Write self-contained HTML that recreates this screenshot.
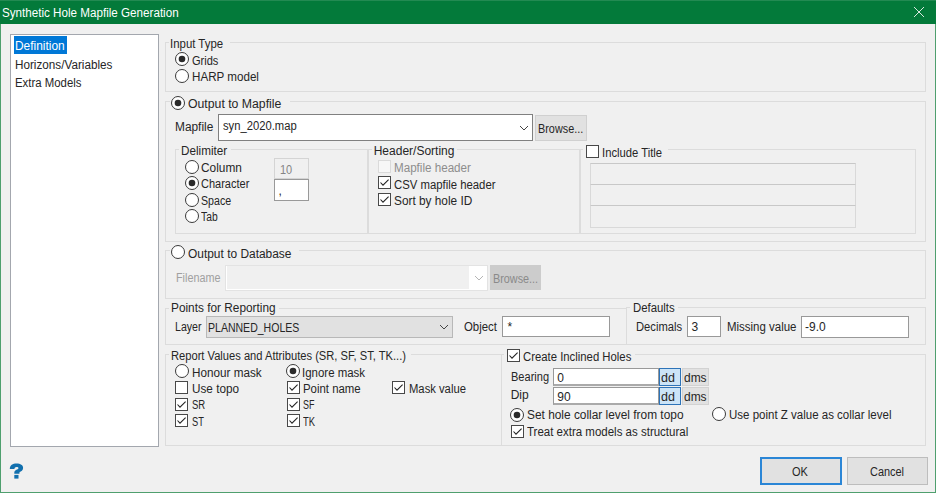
<!DOCTYPE html>
<html><head><meta charset="utf-8"><style>
html,body{margin:0;padding:0;width:936px;height:493px;overflow:hidden;background:#f0f0f0}
body{position:relative;font-family:"Liberation Sans",sans-serif;font-size:12px}
</style></head><body>
<div style="position:absolute;left:0px;top:0px;width:936px;height:493px;background:#4f9f6e"></div>
<div style="position:absolute;left:0px;top:0px;width:936px;height:24px;background:#037a3a"></div>
<div style="position:absolute;left:0px;top:0px;width:936px;height:1px;background:#238a52"></div>
<div style="position:absolute;left:1px;top:24px;width:934px;height:468px;background:#f0f0f0"></div>
<div style="position:absolute;left:2.40px;top:6.30px;font-size:12px;line-height:14px;color:#ffffff;white-space:pre;transform:scaleX(0.9701);transform-origin:0 0;">Synthetic Hole Mapfile Generation</div>
<svg style="position:absolute;left:913px;top:6px" width="12" height="12"><path d="M1 1 L11 11 M11 1 L1 11" stroke="#d8e8de" stroke-width="1"/></svg>
<div style="position:absolute;left:10px;top:34px;width:149px;height:413px;border:1px solid #a3a7ae;background:#fff;box-sizing:border-box"></div>
<div style="position:absolute;left:14px;top:36px;width:53px;height:18px;background:#0078d7"></div>
<div style="position:absolute;left:15.40px;top:39.20px;font-size:12px;line-height:14px;color:#fff;white-space:pre;transform:scaleX(0.9928);transform-origin:0 0;">Definition</div>
<div style="position:absolute;left:15.00px;top:57.50px;font-size:12px;line-height:14px;color:#262626;white-space:pre;transform:scaleX(0.9758);transform-origin:0 0;">Horizons/Variables</div>
<div style="position:absolute;left:15.00px;top:76.30px;font-size:12px;line-height:14px;color:#262626;white-space:pre;transform:scaleX(0.9497);transform-origin:0 0;">Extra Models</div>
<svg style="position:absolute;left:0;top:440px" width="40" height="50"><path d="M9.8 29.1 C9.8 25.2 12.8 23.6 16.5 23.6 C20.5 23.6 23.1 25.3 23.1 28 C23.1 30.4 21.2 31.3 19.6 32.1 L19.4 33.8 L14.3 33.8 L14.3 32.6 C14.3 31 15.6 30.2 17 29.5 C18 29 18.4 28.6 18.4 27.9 C18.4 27.2 17.7 26.9 16.6 26.9 C15.2 26.9 14.5 27.6 14.4 29.1 Z" fill="#1270ae"/><rect x="14.3" y="34.9" width="4.2" height="3.7" fill="#1270ae"/></svg>
<div style="position:absolute;left:165px;top:42px;width:761px;height:50px;border:1px solid #dcdcdc;box-sizing:border-box"></div>
<div style="position:absolute;left:169px;top:41px;width:61px;height:3px;background:#f0f0f0"></div>
<div style="position:absolute;left:170.35px;top:37.10px;font-size:12px;line-height:14px;color:#262626;white-space:pre;transform:scaleX(0.9518);transform-origin:0 0;">Input Type</div>
<svg style="position:absolute;left:174px;top:51.2px" width="16" height="16"><circle cx="8" cy="8" r="6.5" fill="#fff" stroke="#3a3a3a" stroke-width="1"/><circle cx="8" cy="8" r="3.3" fill="#2a2a2a"/></svg>
<div style="position:absolute;left:191.90px;top:54.00px;font-size:12px;line-height:14px;color:#262626;white-space:pre;transform:scaleX(0.9208);transform-origin:0 0;">Grids</div>
<svg style="position:absolute;left:174px;top:68px" width="16" height="16"><circle cx="8" cy="8" r="6.5" fill="#fff" stroke="#3a3a3a" stroke-width="1"/></svg>
<div style="position:absolute;left:191.90px;top:70.20px;font-size:12px;line-height:14px;color:#262626;white-space:pre;transform:scaleX(0.9681);transform-origin:0 0;">HARP model</div>
<div style="position:absolute;left:165px;top:101px;width:761px;height:141px;border:1px solid #dcdcdc;box-sizing:border-box"></div>
<div style="position:absolute;left:170px;top:100px;width:120px;height:3px;background:#f0f0f0"></div>
<svg style="position:absolute;left:170px;top:94.5px" width="16" height="16"><circle cx="8" cy="8" r="6.5" fill="#fff" stroke="#3a3a3a" stroke-width="1"/><circle cx="8" cy="8" r="3.3" fill="#2a2a2a"/></svg>
<div style="position:absolute;left:187.80px;top:97.20px;font-size:12px;line-height:14px;color:#262626;white-space:pre;transform:scaleX(1.0217);transform-origin:0 0;">Output to Mapfile</div>
<div style="position:absolute;left:175.10px;top:120.30px;font-size:12px;line-height:14px;color:#262626;white-space:pre;transform:scaleX(0.9895);transform-origin:0 0;">Mapfile</div>
<div style="position:absolute;left:218px;top:114px;width:315px;height:27px;border:1px solid #808080;background:#fff;box-sizing:border-box"></div>
<div style="position:absolute;left:222.70px;top:119.10px;font-size:12px;line-height:14px;color:#262626;white-space:pre;transform:scaleX(0.9362);transform-origin:0 0;">syn_2020.map</div>
<svg style="position:absolute;left:519px;top:124.5px" width="10" height="6"><path d="M1 1 L5 5 L9 1" fill="none" stroke="#444" stroke-width="1"/></svg>
<div style="position:absolute;left:535px;top:115px;width:52px;height:26px;border:1px solid #d0d0d0;background:#e1e1e1;box-sizing:border-box"></div>
<div style="position:absolute;left:538.00px;top:121.90px;font-size:12px;line-height:14px;color:#262626;white-space:pre;transform:scaleX(0.9038);transform-origin:0 0;">Browse...</div>
<div style="position:absolute;left:175px;top:149px;width:193px;height:85px;border:1px solid #dcdcdc;box-sizing:border-box"></div>
<div style="position:absolute;left:179px;top:148px;width:52px;height:3px;background:#f0f0f0"></div>
<div style="position:absolute;left:181.10px;top:143.50px;font-size:12px;line-height:14px;color:#262626;white-space:pre;transform:scaleX(0.9759);transform-origin:0 0;">Delimiter</div>
<svg style="position:absolute;left:183.8px;top:158.5px" width="16" height="16"><circle cx="8" cy="8" r="6.5" fill="#fff" stroke="#3a3a3a" stroke-width="1"/></svg>
<div style="position:absolute;left:201.40px;top:161.00px;font-size:12px;line-height:14px;color:#262626;white-space:pre;transform:scaleX(0.9883);transform-origin:0 0;">Column</div>
<svg style="position:absolute;left:183.8px;top:175.1px" width="16" height="16"><circle cx="8" cy="8" r="6.5" fill="#fff" stroke="#3a3a3a" stroke-width="1"/><circle cx="8" cy="8" r="3.3" fill="#2a2a2a"/></svg>
<div style="position:absolute;left:201.40px;top:177.40px;font-size:12px;line-height:14px;color:#262626;white-space:pre;transform:scaleX(0.9167);transform-origin:0 0;">Character</div>
<svg style="position:absolute;left:183.8px;top:191.7px" width="16" height="16"><circle cx="8" cy="8" r="6.5" fill="#fff" stroke="#3a3a3a" stroke-width="1"/></svg>
<div style="position:absolute;left:201.40px;top:194.00px;font-size:12px;line-height:14px;color:#262626;white-space:pre;transform:scaleX(0.8850);transform-origin:0 0;">Space</div>
<svg style="position:absolute;left:183.8px;top:207.8px" width="16" height="16"><circle cx="8" cy="8" r="6.5" fill="#fff" stroke="#3a3a3a" stroke-width="1"/></svg>
<div style="position:absolute;left:201.40px;top:210.40px;font-size:12px;line-height:14px;color:#262626;white-space:pre;transform:scaleX(0.8590);transform-origin:0 0;">Tab</div>
<div style="position:absolute;left:274px;top:158px;width:35px;height:21px;border:1px solid #d4d4d4;background:#f0f0f0;box-sizing:border-box"></div>
<div style="position:absolute;left:280.00px;top:163.30px;font-size:12px;line-height:14px;color:#858585;white-space:pre;transform:scaleX(0.9142);transform-origin:0 0;">10</div>
<div style="position:absolute;left:274px;top:179px;width:35px;height:22px;border:1px solid #999;background:#fff;box-sizing:border-box"></div>
<div style="position:absolute;left:278.40px;top:183.60px;font-size:12px;line-height:14px;color:#262626;white-space:pre;">,</div>
<div style="position:absolute;left:368px;top:149px;width:212px;height:85px;border:1px solid #dcdcdc;box-sizing:border-box"></div>
<div style="position:absolute;left:372px;top:148px;width:85px;height:3px;background:#f0f0f0"></div>
<div style="position:absolute;left:373.70px;top:144.30px;font-size:12px;line-height:14px;color:#262626;white-space:pre;">Header/Sorting</div>
<div style="position:absolute;left:378px;top:160px;width:13px;height:13px;box-sizing:border-box;border:1px solid #dadada;background:#f7f7f7"></div>
<div style="position:absolute;left:394.30px;top:160.80px;font-size:12px;line-height:14px;color:#8d8d8d;white-space:pre;transform:scaleX(0.9687);transform-origin:0 0;">Mapfile header</div>
<div style="position:absolute;left:378px;top:176px;width:13px;height:13px;box-sizing:border-box;border:1px solid #484848;background:#fff"></div>
<svg style="position:absolute;left:378px;top:176px" width="13" height="13"><path d="M2.5 6.5 L5 9.2 L10.6 3.6" fill="none" stroke="#222" stroke-width="1.1"/></svg>
<div style="position:absolute;left:394.30px;top:177.50px;font-size:12px;line-height:14px;color:#262626;white-space:pre;transform:scaleX(0.9451);transform-origin:0 0;">CSV mapfile header</div>
<div style="position:absolute;left:378px;top:193px;width:13px;height:13px;box-sizing:border-box;border:1px solid #484848;background:#fff"></div>
<svg style="position:absolute;left:378px;top:193px" width="13" height="13"><path d="M2.5 6.5 L5 9.2 L10.6 3.6" fill="none" stroke="#222" stroke-width="1.1"/></svg>
<div style="position:absolute;left:394.30px;top:194.00px;font-size:12px;line-height:14px;color:#262626;white-space:pre;transform:scaleX(0.9861);transform-origin:0 0;">Sort by hole ID</div>
<div style="position:absolute;left:580px;top:149px;width:336px;height:85px;border:1px solid #dcdcdc;box-sizing:border-box"></div>
<div style="position:absolute;left:583px;top:148px;width:85px;height:3px;background:#f0f0f0"></div>
<div style="position:absolute;left:585.5px;top:144.5px;width:13px;height:13px;box-sizing:border-box;border:1px solid #484848;background:#fff"></div>
<div style="position:absolute;left:601.66px;top:146.30px;font-size:12px;line-height:14px;color:#262626;white-space:pre;transform:scaleX(0.9378);transform-origin:0 0;">Include Title</div>
<div style="position:absolute;left:589.5px;top:163px;width:266.5px;height:22px;border:1px solid #d9d9d9;border-top-color:#c8c8c8;background:#f0f0f0;box-sizing:border-box"></div>
<div style="position:absolute;left:589.5px;top:184px;width:266.5px;height:22px;border:1px solid #d9d9d9;border-top-color:#c8c8c8;background:#f0f0f0;box-sizing:border-box"></div>
<div style="position:absolute;left:589.5px;top:205px;width:266.5px;height:22.5px;border:1px solid #d9d9d9;border-top-color:#c8c8c8;background:#f0f0f0;box-sizing:border-box"></div>
<div style="position:absolute;left:165px;top:250px;width:761px;height:48.5px;border:1px solid #dcdcdc;box-sizing:border-box"></div>
<div style="position:absolute;left:170px;top:249px;width:129px;height:3px;background:#f0f0f0"></div>
<svg style="position:absolute;left:170px;top:243.8px" width="16" height="16"><circle cx="8" cy="8" r="6.5" fill="#fff" stroke="#3a3a3a" stroke-width="1"/></svg>
<div style="position:absolute;left:187.60px;top:247.10px;font-size:12px;line-height:14px;color:#262626;white-space:pre;transform:scaleX(0.9943);transform-origin:0 0;">Output to Database</div>
<div style="position:absolute;left:175.60px;top:270.50px;font-size:12px;line-height:14px;color:#a0a0a0;white-space:pre;transform:scaleX(0.9018);transform-origin:0 0;">Filename</div>
<div style="position:absolute;left:225px;top:264.5px;width:263px;height:26px;border:1px solid #e3e3e3;background:#fff;box-sizing:border-box"></div>
<div style="position:absolute;left:227px;top:266.3px;width:241.5px;height:22.5px;background:#f0f0f0"></div>
<svg style="position:absolute;left:473.5px;top:274.8px" width="10" height="6"><path d="M1 1 L5 5 L9 1" fill="none" stroke="#b5b5b5" stroke-width="1"/></svg>
<div style="position:absolute;left:490px;top:265px;width:51px;height:25px;background:#cccccc"></div>
<div style="position:absolute;left:492.60px;top:272.20px;font-size:12px;line-height:14px;color:#8a8a8a;white-space:pre;transform:scaleX(0.9017);transform-origin:0 0;">Browse...</div>
<div style="position:absolute;left:165px;top:308px;width:462px;height:37px;border:1px solid #dcdcdc;box-sizing:border-box"></div>
<div style="position:absolute;left:169px;top:307px;width:110px;height:3px;background:#f0f0f0"></div>
<div style="position:absolute;left:171.40px;top:301.40px;font-size:12px;line-height:14px;color:#262626;white-space:pre;transform:scaleX(0.9859);transform-origin:0 0;">Points for Reporting</div>
<div style="position:absolute;left:175.10px;top:320.00px;font-size:12px;line-height:14px;color:#262626;white-space:pre;transform:scaleX(0.8827);transform-origin:0 0;">Layer</div>
<div style="position:absolute;left:206px;top:316px;width:247px;height:22px;border:1px solid #b8b8b8;background:#e1e1e1;box-sizing:border-box"></div>
<div style="position:absolute;left:208.10px;top:320.80px;font-size:12px;line-height:14px;color:#262626;white-space:pre;transform:scaleX(0.8776);transform-origin:0 0;">PLANNED_HOLES</div>
<svg style="position:absolute;left:438.5px;top:323.7px" width="10" height="6"><path d="M1 1 L5 5 L9 1" fill="none" stroke="#444" stroke-width="1"/></svg>
<div style="position:absolute;left:464.10px;top:319.90px;font-size:12px;line-height:14px;color:#262626;white-space:pre;transform:scaleX(0.9506);transform-origin:0 0;">Object</div>
<div style="position:absolute;left:501.5px;top:316px;width:108px;height:21px;border:1px solid #999;background:#fff;box-sizing:border-box"></div>
<div style="position:absolute;left:507.40px;top:319.90px;font-size:12px;line-height:14px;color:#262626;white-space:pre;">*</div>
<div style="position:absolute;left:626px;top:307px;width:300px;height:38px;border:1px solid #dcdcdc;box-sizing:border-box"></div>
<div style="position:absolute;left:630px;top:306px;width:48px;height:3px;background:#f0f0f0"></div>
<div style="position:absolute;left:632.70px;top:301.30px;font-size:12px;line-height:14px;color:#262626;white-space:pre;transform:scaleX(0.9473);transform-origin:0 0;">Defaults</div>
<div style="position:absolute;left:636.40px;top:319.90px;font-size:12px;line-height:14px;color:#262626;white-space:pre;transform:scaleX(0.9323);transform-origin:0 0;">Decimals</div>
<div style="position:absolute;left:687px;top:316px;width:34px;height:21px;border:1px solid #999;background:#fff;box-sizing:border-box"></div>
<div style="position:absolute;left:691.40px;top:320.10px;font-size:12px;line-height:14px;color:#262626;white-space:pre;">3</div>
<div style="position:absolute;left:726.80px;top:319.90px;font-size:12px;line-height:14px;color:#262626;white-space:pre;transform:scaleX(0.9559);transform-origin:0 0;">Missing value</div>
<div style="position:absolute;left:800.6px;top:316px;width:108.5px;height:21.5px;border:1px solid #999;background:#fff;box-sizing:border-box"></div>
<div style="position:absolute;left:805.10px;top:320.10px;font-size:12px;line-height:14px;color:#262626;white-space:pre;">-9.0</div>
<div style="position:absolute;left:165px;top:354px;width:336.5px;height:92px;border:1px solid #dcdcdc;box-sizing:border-box"></div>
<div style="position:absolute;left:169px;top:353px;width:242px;height:3px;background:#f0f0f0"></div>
<div style="position:absolute;left:171.00px;top:348.60px;font-size:12px;line-height:14px;color:#262626;white-space:pre;transform:scaleX(0.9288);transform-origin:0 0;">Report Values and Attributes (SR, SF, ST, TK...)</div>
<svg style="position:absolute;left:173.6px;top:363.2px" width="16" height="16"><circle cx="8" cy="8" r="6.5" fill="#fff" stroke="#3a3a3a" stroke-width="1"/></svg>
<div style="position:absolute;left:191.80px;top:365.70px;font-size:12px;line-height:14px;color:#262626;white-space:pre;transform:scaleX(0.9757);transform-origin:0 0;">Honour mask</div>
<svg style="position:absolute;left:285.4px;top:363.2px" width="16" height="16"><circle cx="8" cy="8" r="6.5" fill="#fff" stroke="#3a3a3a" stroke-width="1"/><circle cx="8" cy="8" r="3.3" fill="#2a2a2a"/></svg>
<div style="position:absolute;left:301.94px;top:365.70px;font-size:12px;line-height:14px;color:#262626;white-space:pre;transform:scaleX(0.9555);transform-origin:0 0;">Ignore mask</div>
<div style="position:absolute;left:175px;top:381px;width:13px;height:13px;box-sizing:border-box;border:1px solid #484848;background:#fff"></div>
<div style="position:absolute;left:191.80px;top:382.00px;font-size:12px;line-height:14px;color:#262626;white-space:pre;transform:scaleX(0.9782);transform-origin:0 0;">Use topo</div>
<div style="position:absolute;left:287px;top:381px;width:13px;height:13px;box-sizing:border-box;border:1px solid #484848;background:#fff"></div>
<svg style="position:absolute;left:287px;top:381px" width="13" height="13"><path d="M2.5 6.5 L5 9.2 L10.6 3.6" fill="none" stroke="#222" stroke-width="1.1"/></svg>
<div style="position:absolute;left:302.90px;top:382.00px;font-size:12px;line-height:14px;color:#262626;white-space:pre;transform:scaleX(0.9504);transform-origin:0 0;">Point name</div>
<div style="position:absolute;left:392px;top:381px;width:13px;height:13px;box-sizing:border-box;border:1px solid #484848;background:#fff"></div>
<svg style="position:absolute;left:392px;top:381px" width="13" height="13"><path d="M2.5 6.5 L5 9.2 L10.6 3.6" fill="none" stroke="#222" stroke-width="1.1"/></svg>
<div style="position:absolute;left:408.90px;top:382.00px;font-size:12px;line-height:14px;color:#262626;white-space:pre;transform:scaleX(0.9374);transform-origin:0 0;">Mask value</div>
<div style="position:absolute;left:175px;top:397.5px;width:13px;height:13px;box-sizing:border-box;border:1px solid #484848;background:#fff"></div>
<svg style="position:absolute;left:175px;top:397.5px" width="13" height="13"><path d="M2.5 6.5 L5 9.2 L10.6 3.6" fill="none" stroke="#222" stroke-width="1.1"/></svg>
<div style="position:absolute;left:191.50px;top:398.30px;font-size:12px;line-height:14px;color:#262626;white-space:pre;transform:scaleX(0.7939);transform-origin:0 0;">SR</div>
<div style="position:absolute;left:287px;top:397.5px;width:13px;height:13px;box-sizing:border-box;border:1px solid #484848;background:#fff"></div>
<svg style="position:absolute;left:287px;top:397.5px" width="13" height="13"><path d="M2.5 6.5 L5 9.2 L10.6 3.6" fill="none" stroke="#222" stroke-width="1.1"/></svg>
<div style="position:absolute;left:303.20px;top:398.30px;font-size:12px;line-height:14px;color:#262626;white-space:pre;transform:scaleX(0.7465);transform-origin:0 0;">SF</div>
<div style="position:absolute;left:175px;top:414px;width:13px;height:13px;box-sizing:border-box;border:1px solid #484848;background:#fff"></div>
<svg style="position:absolute;left:175px;top:414px" width="13" height="13"><path d="M2.5 6.5 L5 9.2 L10.6 3.6" fill="none" stroke="#222" stroke-width="1.1"/></svg>
<div style="position:absolute;left:191.50px;top:414.80px;font-size:12px;line-height:14px;color:#262626;white-space:pre;transform:scaleX(0.7748);transform-origin:0 0;">ST</div>
<div style="position:absolute;left:287px;top:414px;width:13px;height:13px;box-sizing:border-box;border:1px solid #484848;background:#fff"></div>
<svg style="position:absolute;left:287px;top:414px" width="13" height="13"><path d="M2.5 6.5 L5 9.2 L10.6 3.6" fill="none" stroke="#222" stroke-width="1.1"/></svg>
<div style="position:absolute;left:303.20px;top:414.80px;font-size:12px;line-height:14px;color:#262626;white-space:pre;transform:scaleX(0.7828);transform-origin:0 0;">TK</div>
<div style="position:absolute;left:500.5px;top:354px;width:425.5px;height:92px;border:1px solid #dcdcdc;box-sizing:border-box"></div>
<div style="position:absolute;left:504px;top:353px;width:131px;height:3px;background:#f0f0f0"></div>
<div style="position:absolute;left:507px;top:349.3px;width:13px;height:13px;box-sizing:border-box;border:1px solid #484848;background:#fff"></div>
<svg style="position:absolute;left:507px;top:349.3px" width="13" height="13"><path d="M2.5 6.5 L5 9.2 L10.6 3.6" fill="none" stroke="#222" stroke-width="1.1"/></svg>
<div style="position:absolute;left:523.00px;top:350.20px;font-size:12px;line-height:14px;color:#262626;white-space:pre;transform:scaleX(0.9440);transform-origin:0 0;">Create Inclined Holes</div>
<div style="position:absolute;left:510.70px;top:370.10px;font-size:12px;line-height:14px;color:#262626;white-space:pre;transform:scaleX(0.9192);transform-origin:0 0;">Bearing</div>
<div style="position:absolute;left:553px;top:367.5px;width:105.5px;height:18px;border:1px solid #999;border-bottom:2px solid #aaa;background:#fff;box-sizing:border-box"></div>
<div style="position:absolute;left:557.30px;top:371.10px;font-size:12px;line-height:14px;color:#262626;white-space:pre;">0</div>
<div style="position:absolute;left:659px;top:368.3px;width:22px;height:17.3px;border:1px solid #2d73b8;background:#cce4f7;box-sizing:border-box"></div>
<div style="position:absolute;left:660.70px;top:371.40px;font-size:12px;line-height:14px;color:#262626;white-space:pre;transform:scaleX(1.0415);transform-origin:0 0;">dd</div>
<div style="position:absolute;left:682.4px;top:368.3px;width:26.5px;height:17.3px;border:1px solid #d2d2d2;background:#e1e1e1;box-sizing:border-box"></div>
<div style="position:absolute;left:683.80px;top:371.40px;font-size:12px;line-height:14px;color:#262626;white-space:pre;transform:scaleX(0.9969);transform-origin:0 0;">dms</div>
<div style="position:absolute;left:510.70px;top:388.20px;font-size:12px;line-height:14px;color:#262626;white-space:pre;">Dip</div>
<div style="position:absolute;left:553px;top:387px;width:105.5px;height:18px;border:1px solid #999;border-bottom:2px solid #aaa;background:#fff;box-sizing:border-box"></div>
<div style="position:absolute;left:557.30px;top:390.20px;font-size:12px;line-height:14px;color:#262626;white-space:pre;">90</div>
<div style="position:absolute;left:659px;top:387.4px;width:22px;height:17.4px;border:1px solid #2d73b8;background:#cce4f7;box-sizing:border-box"></div>
<div style="position:absolute;left:660.70px;top:390.20px;font-size:12px;line-height:14px;color:#262626;white-space:pre;transform:scaleX(1.0415);transform-origin:0 0;">dd</div>
<div style="position:absolute;left:682.4px;top:387.4px;width:26.5px;height:17.4px;border:1px solid #d2d2d2;background:#e1e1e1;box-sizing:border-box"></div>
<div style="position:absolute;left:683.80px;top:390.20px;font-size:12px;line-height:14px;color:#262626;white-space:pre;transform:scaleX(0.9969);transform-origin:0 0;">dms</div>
<svg style="position:absolute;left:509.1px;top:406.7px" width="16" height="16"><circle cx="8" cy="8" r="6.5" fill="#fff" stroke="#3a3a3a" stroke-width="1"/><circle cx="8" cy="8" r="3.3" fill="#2a2a2a"/></svg>
<div style="position:absolute;left:526.80px;top:408.10px;font-size:12px;line-height:14px;color:#262626;white-space:pre;transform:scaleX(0.9899);transform-origin:0 0;">Set hole collar level from topo</div>
<svg style="position:absolute;left:711.4px;top:405.9px" width="16" height="16"><circle cx="8" cy="8" r="6.5" fill="#fff" stroke="#3a3a3a" stroke-width="1"/></svg>
<div style="position:absolute;left:729.20px;top:408.10px;font-size:12px;line-height:14px;color:#262626;white-space:pre;transform:scaleX(0.9588);transform-origin:0 0;">Use point Z value as collar level</div>
<div style="position:absolute;left:510.7px;top:424.5px;width:13px;height:13px;box-sizing:border-box;border:1px solid #484848;background:#fff"></div>
<svg style="position:absolute;left:510.7px;top:424.5px" width="13" height="13"><path d="M2.5 6.5 L5 9.2 L10.6 3.6" fill="none" stroke="#222" stroke-width="1.1"/></svg>
<div style="position:absolute;left:526.80px;top:424.80px;font-size:12px;line-height:14px;color:#262626;white-space:pre;transform:scaleX(0.9581);transform-origin:0 0;">Treat extra models as structural</div>
<div style="position:absolute;left:760px;top:457px;width:82px;height:28px;border:2px solid #2b86d6;background:#e1e1e1;box-sizing:border-box"></div>
<div style="position:absolute;left:792.10px;top:465.40px;font-size:12px;line-height:14px;color:#262626;white-space:pre;transform:scaleX(0.9173);transform-origin:0 0;">OK</div>
<div style="position:absolute;left:847px;top:457px;width:81px;height:28px;border:1px solid #bdbdbd;background:#e1e1e1;box-sizing:border-box"></div>
<div style="position:absolute;left:870.00px;top:465.40px;font-size:12px;line-height:14px;color:#262626;white-space:pre;transform:scaleX(0.9104);transform-origin:0 0;">Cancel</div>
</body></html>
